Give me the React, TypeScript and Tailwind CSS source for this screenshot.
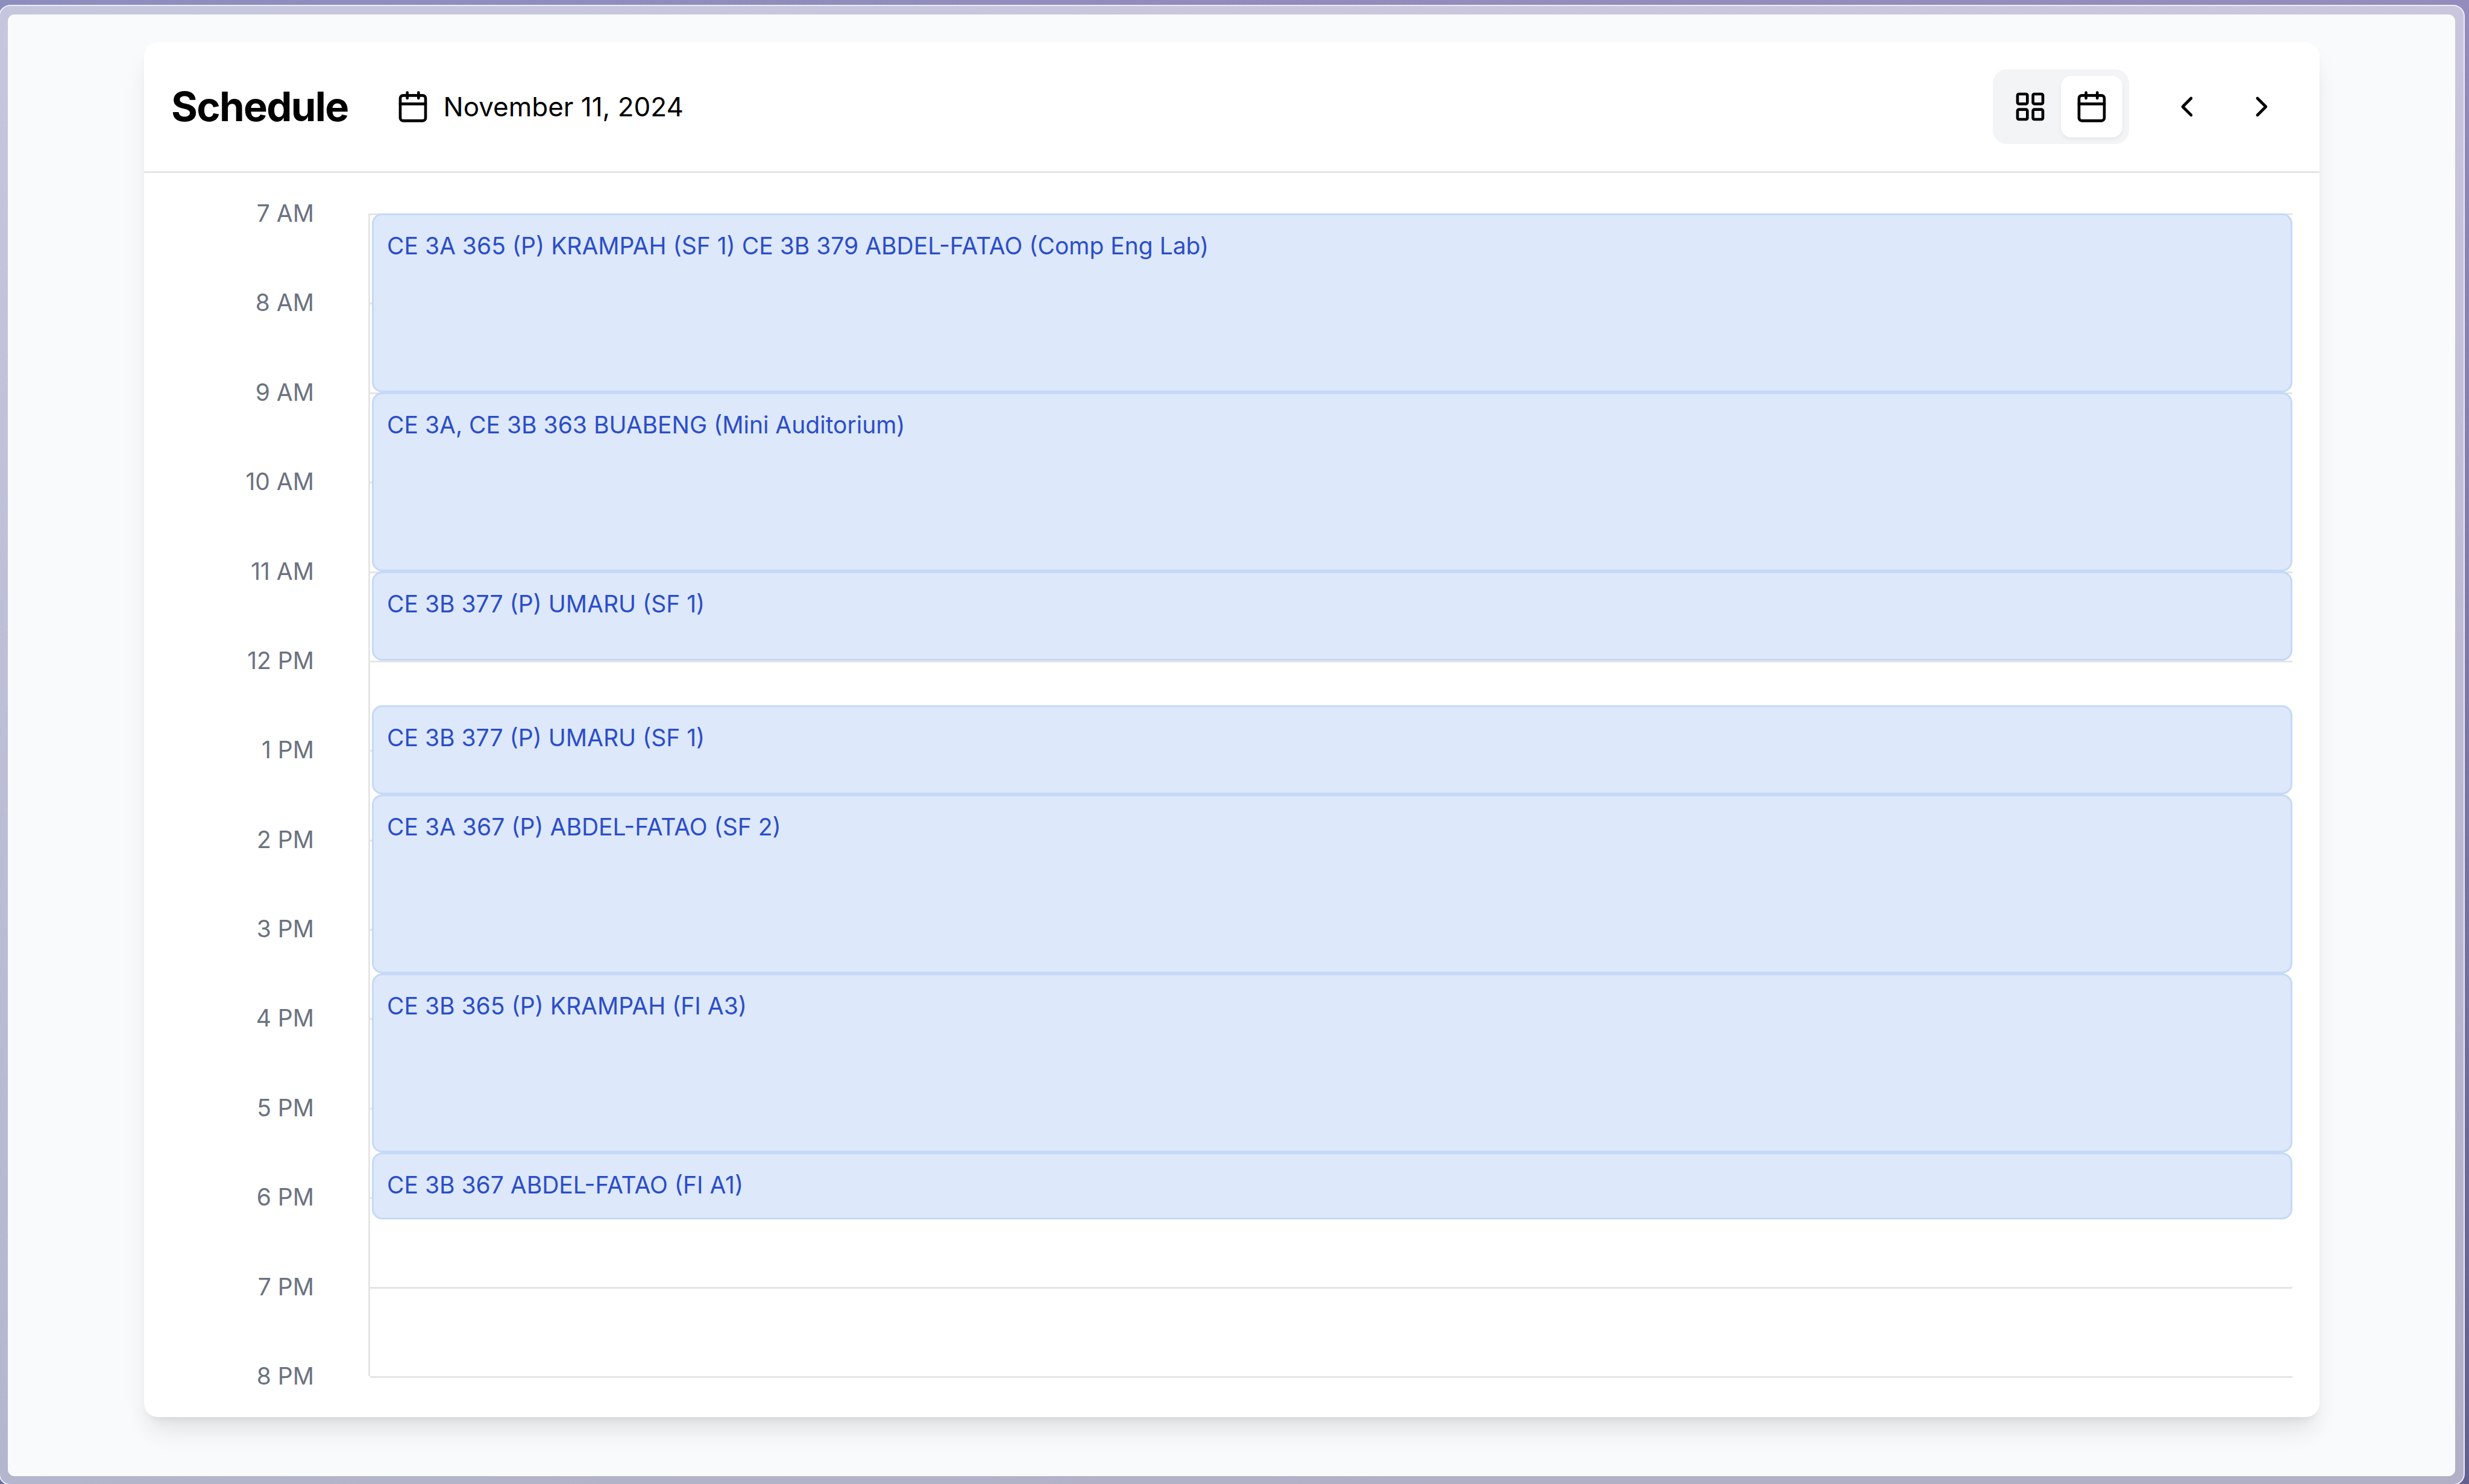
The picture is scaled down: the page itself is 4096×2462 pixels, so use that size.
import { useState } from "react";
import type { CSSProperties } from "react";
import { Calendar, ChevronLeft, ChevronRight, LayoutGrid } from "lucide-react";

type ScheduleEvent = { title: string; start: number; end: number };

const FIRST_HOUR = 7;
const HOURS = Array.from({ length: 14 }, (_, i) => FIRST_HOUR + i);

const EVENTS: ScheduleEvent[] = [
  { title: "CE 3A 365 (P) KRAMPAH (SF 1) CE 3B 379 ABDEL-FATAO (Comp Eng Lab)", start: 7, end: 9 },
  { title: "CE 3A, CE 3B 363 BUABENG (Mini Auditorium)", start: 9, end: 11 },
  { title: "CE 3B 377 (P) UMARU (SF 1)", start: 11, end: 12 },
  { title: "CE 3B 377 (P) UMARU (SF 1)", start: 12.5, end: 13.5 },
  { title: "CE 3A 367 (P) ABDEL-FATAO (SF 2)", start: 13.5, end: 15.5 },
  { title: "CE 3B 365 (P) KRAMPAH (FI A3)", start: 15.5, end: 17.5 },
  { title: "CE 3B 367 ABDEL-FATAO (FI A1)", start: 17.5, end: 18.25 },
];

// The grid has one row for each quarter of an hour.
const rowOf = (hour: number) => (hour - FIRST_HOUR) * 4 + 1;

const rows = (start: number, end: number): CSSProperties => ({
  gridRow: `${rowOf(start)} / ${rowOf(end)}`,
});

const hourLabel = (hour: number) =>
  `${hour > 12 ? hour - 12 : hour} ${hour < 12 ? "AM" : "PM"}`;

function ViewSwitch() {
  const [view, setView] = useState<"grid" | "day">("day");
  const base = "flex size-[102px] items-center justify-center rounded-[17px]";
  const active = "bg-white shadow-[0_3px_6px_rgba(0,0,0,0.06)]";
  return (
    <div className="flex rounded-[23px] bg-[#f3f4f6] p-[11px]">
      <button
        type="button"
        aria-label="Grid view"
        aria-pressed={view === "grid"}
        onClick={() => setView("grid")}
        className={`${base} ${view === "grid" ? active : ""}`}
      >
        <LayoutGrid className="size-14" />
      </button>
      <button
        type="button"
        aria-label="Day view"
        aria-pressed={view === "day"}
        onClick={() => setView("day")}
        className={`${base} ${view === "day" ? active : ""}`}
      >
        <Calendar className="size-14" />
      </button>
    </div>
  );
}

function Header() {
  return (
    <header className="flex items-center justify-between border-b-3 border-[#e5e5e5] p-[45px]">
      <div className="flex items-center gap-[79px]">
        <h1 className="text-[67px] leading-[90px] font-bold tracking-tight">Schedule</h1>
        <div className="flex items-center gap-[23px]">
          <Calendar className="size-14" />
          <span className="text-[44px] leading-[68px]">November 11, 2024</span>
        </div>
      </div>
      <div className="flex items-center gap-[45px]">
        <ViewSwitch />
        <nav className="flex gap-[22px]">
          <button type="button" aria-label="Previous day" className="flex size-[102px] items-center justify-center">
            <ChevronLeft className="size-14" />
          </button>
          <button type="button" aria-label="Next day" className="flex size-[102px] items-center justify-center">
            <ChevronRight className="size-14" />
          </button>
        </nav>
      </div>
    </header>
  );
}

function DayGrid() {
  return (
    <div className="grid min-h-0 flex-1 auto-rows-[0px] grid-cols-[327px_minmax(0,1fr)] grid-rows-[repeat(52,minmax(0,1fr))]">
      <div className="col-start-2 border-l-3 border-[#e5e5e5]" style={rows(7, 20)} />
      {HOURS.map((hour) => (
        <span
          key={`label-${hour}`}
          className="col-start-1 -translate-y-1/2 self-start pr-[90px] text-right text-[39px] leading-[58px] text-[#6b7280]"
          style={rows(hour, hour + 0.25)}
        >
          {hourLabel(hour)}
        </span>
      ))}
      {HOURS.map((hour) => (
        <div
          key={`line-${hour}`}
          className="col-start-2 ml-[3px] h-0 self-start border-t-3 border-[#e5e5e5]"
          style={rows(hour, hour + 0.25)}
        />
      ))}
      {EVENTS.map((event) => (
        <article
          key={event.start}
          className="col-start-2 ml-1.5 overflow-hidden rounded-[17px] border-3 border-[#c5d9f7] bg-[#dde8fb] p-[22px] text-[39px] leading-[58px] text-[#2b4dc9]"
          style={rows(event.start, event.end)}
        >
          {event.title}
        </article>
      ))}
    </div>
  );
}

export default function App() {
  return (
    <div className="flex h-screen flex-col overflow-hidden bg-[linear-gradient(to_right,rgba(120,145,195,0.25),transparent_60%),linear-gradient(to_bottom,#938cbc,#62608f)] pt-2 pr-[7px] font-[Inter,sans-serif] text-black">
      <div className="-mb-0.5 -ml-0.5 flex min-h-0 flex-1 flex-col rounded-[19px] border-2 border-[#ecebfa] bg-white/50 p-[13px] pt-3.5 pr-3.5">
        <main className="flex min-h-0 flex-1 flex-col rounded-[11px] bg-[#f9fafc] pt-[46px] pr-[225px] pb-[98px] pl-[226px]">
          <section className="flex min-h-0 flex-1 flex-col rounded-[23px] bg-white shadow-[0_28px_42px_-8px_rgba(0,0,0,0.1),0_11px_17px_-11px_rgba(0,0,0,0.1)]">
            <Header />
            <div className="flex min-h-0 flex-1 flex-col px-[45px] pt-[67px] pb-[68px]">
              <DayGrid />
            </div>
          </section>
        </main>
      </div>
    </div>
  );
}
